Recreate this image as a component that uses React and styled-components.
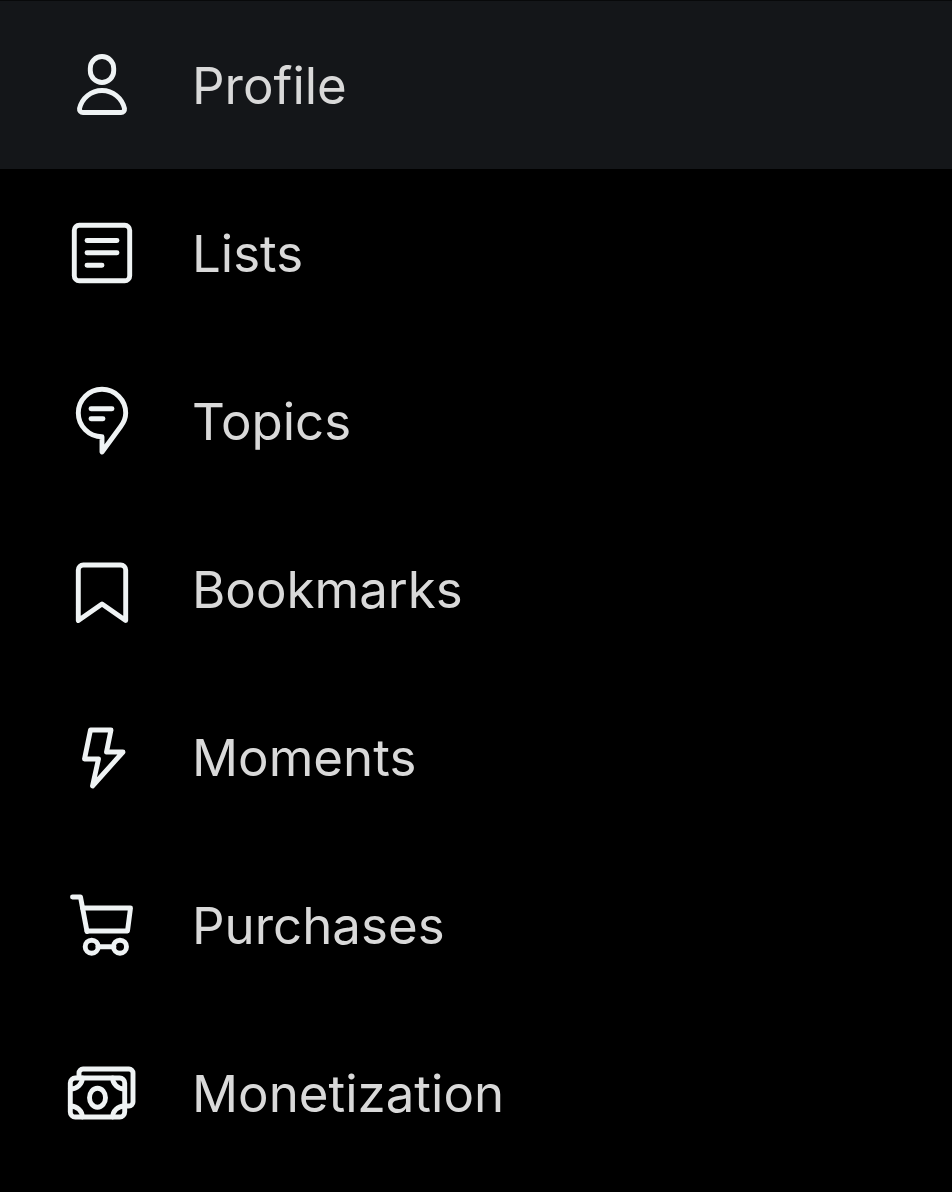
import React from 'react'
import styled, { createGlobalStyle } from 'styled-components'

const GlobalStyle = createGlobalStyle`
  html, body {
    margin: 0;
    padding: 0;
    background: #000;
    overflow: hidden;
  }
`

const Menu = styled.nav`
  display: flex;
  flex-direction: column;
  width: 952px;
  height: 1192px;
  background: #000;
  font-family: Inter, "Liberation Sans", sans-serif;
`

const Row = styled.div`
  display: flex;
  align-items: center;
  gap: 54px;
  height: 168px;
  box-sizing: border-box;
  padding-left: 66px;
  background: ${(p) => (p.$active ? '#141619' : 'transparent')};
  box-shadow: ${(p) => (p.$active ? 'inset 0 1px 0 #08090a, 0 1px 0 #141619' : 'none')};
`

const Icon = styled.svg`
  flex: none;
  width: 72px;
  height: 72px;
  fill: none;
  stroke: #eff3f4;
  stroke-width: 4.9;
  stroke-linecap: round;
  stroke-linejoin: round;
`

const Label = styled.span`
  padding-top: 3px;
  font-size: 51px;
  font-weight: 400;
  line-height: 60px;
  color: #d9d9d9;
`

const items = [
  {
    label: 'Profile',
    icon: (
      <>
        <rect x="24.3" y="8.5" width="23.4" height="26" rx="11.7" />
        <path d="M17 64.5h38a3.5 3.5 0 0 0 3.5-4C56 50 47 42.5 36 42.5S16 50 13.5 60.5a3.5 3.5 0 0 0 3.5 4z" />
      </>
    ),
  },
  {
    label: 'Lists',
    icon: (
      <>
        <rect x="8.3" y="9.3" width="55.4" height="55.4" rx="5" />
        <path d="M21 24.5h30M21 36.7h30M21 49.3h15" />
      </>
    ),
  },
  {
    label: 'Topics',
    icon: (
      <>
        <path d="M36 52.7C23 52.7 12.3 42 12.3 29S23 5.3 36 5.3s23.7 10.6 23.7 23.7c0 5-2 9.5-5 13.5L36 68V52.7z" />
        <path d="M25 24.7h21M25 34.7h12" />
      </>
    ),
  },
  {
    label: 'Bookmarks',
    icon: <path d="M12.3 68.5V18a5 5 0 0 1 5-5h37.4a5 5 0 0 1 5 5v50.5L36 52z" />,
  },
  {
    label: 'Moments',
    icon: <path d="M24.5 10H45l-4.500 22H57L26.500 66l6-27H18.500z" />,
  },
  {
    label: 'Purchases',
    icon: (
      <>
        <path d="M6.500 9h8L21 43.500" />
        <path d="M16.500 20h48l-3 23H21" />
        <circle cx="25.700" cy="58.700" r="6.500" />
        <circle cx="54" cy="58.700" r="6.500" />
        <path d="M32 58.700h16" />
      </>
    ),
  },
  {
    label: 'Monetization',
    icon: (
      <>
        <path d="M13 21v-4a4 4 0 0 1 4-4h46a4 4 0 0 1 4 4v29a4 4 0 0 1-4 4h-4" />
        <rect x="4.300" y="22" width="54.400" height="39" rx="5" />
        <ellipse cx="31.500" cy="41.700" rx="8" ry="9.500" />
        <path d="M4.300 33c7 0 12-5 12-11M58.700 33c-7 0-12-5-12-11M4.300 50c7 0 12 5 12 11M58.700 50c-7 0-12 5-12 11" />
      </>
    ),
  },
]

export default function App() {
  return (
    <>
      <GlobalStyle />
      <Menu>
        {items.map((item, i) => (
          <Row key={item.label} $active={i === 0}>
            <Icon viewBox="0 0 72 72">{item.icon}</Icon>
            <Label>{item.label}</Label>
          </Row>
        ))}
      </Menu>
    </>
  )
}
